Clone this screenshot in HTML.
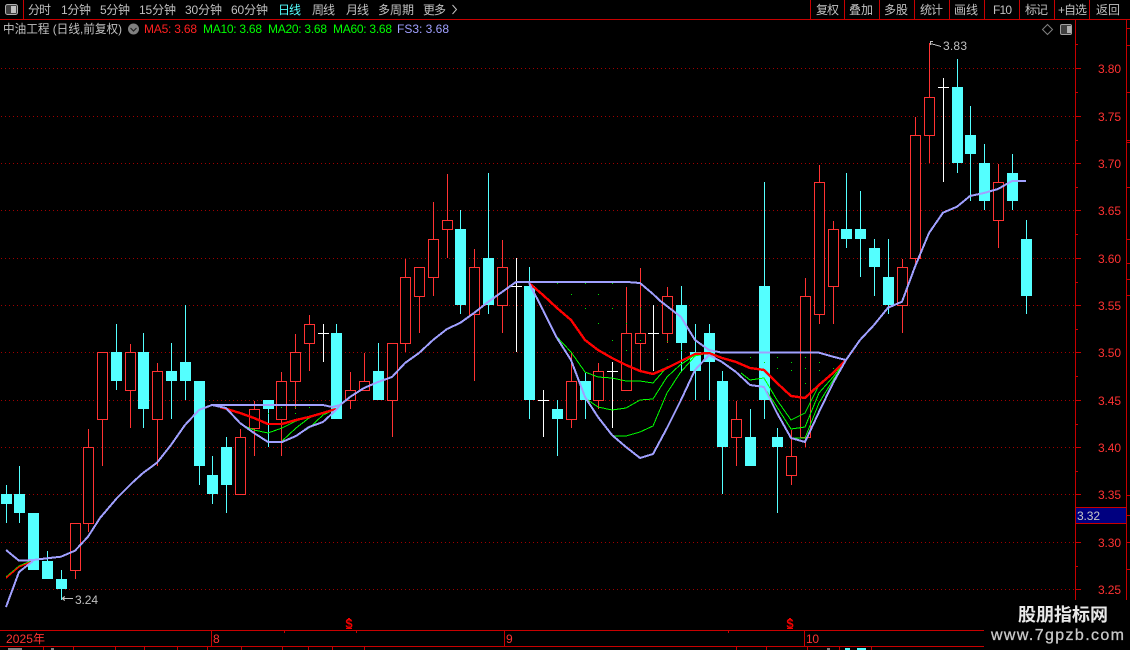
<!DOCTYPE html>
<html lang="zh"><head><meta charset="utf-8"><title>中油工程</title>
<style>
html,body{margin:0;padding:0;background:#000;width:1130px;height:650px;overflow:hidden}
svg{display:block;font-family:"Liberation Sans","Noto Sans CJK SC",sans-serif}
.c{shape-rendering:crispEdges}
.t{fill:#c0c0c0;font-size:12px}
.y{fill:#ff3232;font-size:12px}
polyline{fill:none;shape-rendering:crispEdges;stroke-linejoin:round}
.g{stroke:#00ff00;stroke-width:1}
.r{stroke:#ff0000;stroke-width:2.4}
.l{stroke:#a0a0ff;stroke-width:2}
</style></head><body>
<svg width="1130" height="650" viewBox="0 0 1130 650" xmlns="http://www.w3.org/2000/svg">
<rect width="1130" height="650" fill="#000"/>
<!-- grid -->
<g stroke="#a00000" stroke-width="1" stroke-dasharray="1 3" class="c">
<path d="M1 68.5H1075M1 116.5H1075M1 163.5H1075M1 210.5H1075M1 258.5H1075M1 305.5H1075M1 352.5H1075M1 400.5H1075M1 447.5H1075M1 494.5H1075M1 542.5H1075M1 589.5H1075"/>
</g>
<!-- chrome lines -->
<g stroke="#c80000" stroke-width="1" class="c" fill="none">
<path d="M0 19.5H1130M23.5 0V19M810.5 0V19M844.5 0V19M879.5 0V19M914.5 0V19M949.5 0V19M984.5 0V19M1019.5 0V19M1054.5 0V19M1089.5 0V19"/>
<path d="M1075.5 20V600M1126.5 20V600"/>
<path d="M1075 68.5h6M1075 116.5h6M1075 163.5h6M1075 210.5h6M1075 258.5h6M1075 305.5h6M1075 352.5h6M1075 400.5h6M1075 447.5h6M1075 494.5h6M1075 542.5h6M1075 589.5h6"/>
<path d="M1075 44.5h3M1075 92.5h3M1075 140.5h3M1075 187.5h3M1075 234.5h3M1075 282.5h3M1075 329.5h3M1075 376.5h3M1075 424.5h3M1075 471.5h3M1075 518.5h3M1075 566.5h3"/>
<path d="M1127 28.5h3M1127 45.5h3M1127 92.5h3M1127 140.5h3M1127 142.5h3M1127 187.5h3M1127 239.5h3M1127 263.5h3M1127 279.5h3M1127 295.5h3M1127 495.5h3M1127 515.5h3M1127 542.5h3M1127 569.5h3"/>
<path d="M0 630.5H984M0 646.5H984M211.5 631V646M504.5 631V646M804.5 631V646M284.5 630V633M356.5 630V633M728.5 630V633"/>
<path d="M43.5 647V650M73.5 647V650M115.5 647V650M144.5 647V650M177.5 647V650M207.5 647V650M241.5 647V650M282.5 647V650M308.5 647V650M332.5 647V650M364.5 647V650M736.5 647V650M766.5 647V650M807.5 647V650M839.5 647V650M871.5 647V650"/>
</g>
<rect x="8" y="648" width="14" height="2" fill="#808080" class="c"/>
<rect x="51" y="648" width="3" height="2" fill="#808080" class="c"/>
<rect x="827" y="648" width="3" height="2" fill="#808080" class="c"/>
<rect x="845" y="648" width="5" height="2" fill="#54ffff" class="c"/>
<rect x="857" y="648" width="9" height="2" fill="#54ffff" class="c"/>
<!-- cyan wicks -->
<path class="c" stroke="#54ffff" fill="none" d="M6.5 485V523M19.5 466V523M47.5 551V579M61.5 570V600M116.5 324V390M143.5 333V428M171.5 343V419M185.5 305V400M199.5 381V485M212.5 456V504M226.5 437V513M268.5 400V447M336.5 324V419M378.5 343V400M460.5 210V314M488.5 173V314M529.5 267V419M557.5 400V456M585.5 373V419M681.5 286V371M695.5 324V400M709.5 324V400M722.5 371V494M750.5 409V466M764.5 182V419M777.5 428V513M846.5 173V248M860.5 191V277M874.5 239V296M888.5 239V314M957.5 59V173M970.5 106V201M984.5 144V210M1012.5 154V210M1026.5 220V314"/>
<!-- red wicks -->
<path class="c" stroke="#ff3232" fill="none" d="M75.5 523V579M88.5 429V532M102.5 352V466M130.5 344V428M157.5 363V466M240.5 429V495M254.5 401V456M281.5 372V456M295.5 334V409M309.5 315V371M350.5 372V409M364.5 353V391M392.5 343V437M405.5 259V352M419.5 267V333M433.5 202V296M447.5 174V258M474.5 249V381M502.5 240V333M571.5 353V428M598.5 363V409M626.5 287V390M640.5 268V372M667.5 287V343M736.5 401V466M791.5 430V485M805.5 278V447M819.5 165V324M833.5 221V324M902.5 259V333M915.5 117V267M929.5 43V163M998.5 164V248"/>
<!-- cyan bodies -->
<path class="c" fill="#54ffff" d="M1 494h11v10h-11zM14 494h11v19h-11zM28 513h11v57h-11zM42 561h11v18h-11zM56 579h11v10h-11zM111 352h11v29h-11zM138 352h11v57h-11zM166 371h11v10h-11zM180 362h11v19h-11zM194 381h11v85h-11zM207 475h11v19h-11zM221 447h11v38h-11zM263 400h11v9h-11zM331 333h11v86h-11zM373 371h11v29h-11zM455 229h11v76h-11zM483 258h11v47h-11zM524 286h11v114h-11zM552 409h11v10h-11zM580 381h11v19h-11zM676 305h11v38h-11zM690 352h11v19h-11zM704 333h11v29h-11zM717 381h11v66h-11zM745 437h11v29h-11zM759 286h11v114h-11zM772 437h11v10h-11zM841 229h11v10h-11zM855 229h11v10h-11zM869 248h11v19h-11zM883 277h11v28h-11zM952 87h11v76h-11zM965 135h11v19h-11zM979 163h11v38h-11zM1007 173h11v28h-11zM1021 239h11v57h-11z"/>
<!-- red bodies -->
<path class="c" fill="#000" stroke="#ff3232" d="M70.5 523.5h10v47h-10zM83.5 447.5h10v76h-10zM97.5 352.5h10v67h-10zM125.5 352.5h10v38h-10zM152.5 371.5h10v48h-10zM235.5 437.5h10v57h-10zM249.5 409.5h10v19h-10zM276.5 381.5h10v38h-10zM290.5 352.5h10v29h-10zM304.5 324.5h10v19h-10zM345.5 390.5h10v10h-10zM359.5 381.5h10v9h-10zM387.5 343.5h10v57h-10zM400.5 277.5h10v66h-10zM414.5 267.5h10v29h-10zM428.5 239.5h10v38h-10zM442.5 220.5h10v9h-10zM469.5 267.5h10v47h-10zM497.5 267.5h10v38h-10zM566.5 381.5h10v38h-10zM593.5 371.5h10v29h-10zM621.5 333.5h10v57h-10zM635.5 333.5h10v10h-10zM662.5 296.5h10v37h-10zM731.5 419.5h10v18h-10zM786.5 456.5h10v19h-10zM800.5 296.5h10v141h-10zM814.5 182.5h10v132h-10zM828.5 229.5h10v57h-10zM897.5 267.5h10v38h-10zM910.5 135.5h10v123h-10zM924.5 97.5h10v38h-10zM993.5 182.5h10v38h-10z"/>
<!-- doji -->
<path class="c" stroke="#fff" fill="none" d="M323.5 324V362M318 333.5h11M516.5 258V352M511 286.5h11M543.5 390V437M538 400.5h11M612.5 362V428M607 371.5h11M653.5 305V371M648 333.5h11M943.5 78V182M938 87.5h11"/>
<!-- green dots -->
<path class="c" fill="#00e000" d="M557 283h1v1h-1zM585 283h1v1h-1zM612 283h1v1h-1zM571 294h1v1h-1zM598 294h1v1h-1zM585 308h1v1h-1zM612 308h1v1h-1zM598 323h1v1h-1zM612 340h1v1h-1zM626 323h1v1h-1zM640 308h1v1h-1zM640 340h1v1h-1zM626 350h1v1h-1zM667 341h1v1h-1zM667 359h1v1h-1zM681 350h1v1h-1zM750 357h1v1h-1zM764 362h1v1h-1zM777 357h1v1h-1zM791 362h1v1h-1zM805 357h1v1h-1zM819 362h1v1h-1zM777 368h1v1h-1zM791 370h1v1h-1zM805 368h1v1h-1zM819 370h1v1h-1zM833 368h1v1h-1zM805 383h1v1h-1zM268 413h1v1h-1zM281 407h1v1h-1zM295 407h1v1h-1zM309 407h1v1h-1zM295 413h1v1h-1z"/>
<!-- green lines -->
<g class="g">
<polyline points="6,578 19,567 33,561"/>
<polyline points="6,577 19,566 33,560"/>
<polyline points="240,424 254,430 268,433 282,428 296,421 309,417 323,413 336,409"/>
<polyline points="282,441 296,428 309,418 323,413 336,409"/>
<polyline points="282,442 296,436 309,428 323,415 336,409"/>
<polyline points="557,337 571,352 585,372 598,377 612,378 626,381 640,381 653,383 667,367 680,362 695,354 709,353"/>
<polyline points="585,398 598,407 612,410 626,408 640,400 653,399 667,377 680,365 695,355 709,353"/>
<polyline points="612,436 626,436 640,432 653,426 667,393 680,373 695,356 709,353"/>
<polyline points="741,373 750,380 764,378 777,400 791,420 805,413 819,385 833,373 846,360"/>
<polyline points="764,387 777,407 791,429 805,427 819,393 833,377 846,360"/>
<polyline points="791,438 805,438 819,403 833,380 846,360"/>
</g>
<!-- red lines -->
<g class="r">
<polyline style="stroke-width:1.4" points="6,578 19,567 33,561"/>
<polyline points="220,407 240,413 254,418 268,424 282,424 296,420 309,417 323,413 336,409"/>
<polyline points="529,283 543,295 557,308 571,320 585,340 598,350 612,358 626,365 640,371 653,374 667,368 681,361 695,354 709,353 722,358 736,362 750,368 764,370 777,383 791,396 805,398 819,385 833,373 846,360"/>
</g>
<!-- lavender lines -->
<g class="l">
<polyline points="6,550 19,560.7 33,560 47,558.3 61,556.7 75,550.7 88,536.7 100,518 117,498 132,483 143,473 157,462.7 171,445 185,425 199,410 212,405 323,405 332,407 340,405 350,397 364,388 378,382 392,377 405,363 419,353 433,340 447,329 460,323 474,313 488,302 502,292 516,282 529,282 627,282 640,283 653,294 660,300.7 681,317 695,340 709,350 722,352.7 819,352.7 833,356.7 846,360 860,340 874,325 888,307.7 902,301.7 915,266.7 929,233 943,212.7 957,206.7 970,196 984,193 998,189 1012,181 1026,181"/>
<polyline points="6,607 19,572 33,561"/>
<polyline points="212,405 226,408 240,423 254,433 268,442 282,442 296,436 309,427 323,422 336,410 340,405"/>
<polyline points="529,283 543,310 557,338 571,360 585,397 598,417 612,435 626,447 640,458 653,454 667,428 681,400 695,370 709,355 722,362 736,372 750,385 764,387 777,413 791,438 805,442 819,412 833,383 846,360"/>
</g>
<!-- annotations -->
<g fill="none" stroke="#c0c0c0" class="c">
<path d="M930 43.5l4 1 7 2M930.5 41v4M930 41.5h3"/>
<path d="M62 598.5h11M62 598.5l3-2M62 598.5l3 2"/>
</g>
<text class="t" x="943" y="50" textLength="24" lengthAdjust="spacing">3.83</text>
<text class="t" x="75" y="604" textLength="23" lengthAdjust="spacing">3.24</text>
<!-- y labels -->
<g class="y">
<text x="1098" y="73" textLength="23" lengthAdjust="spacing">3.80</text>
<text x="1098" y="121" textLength="23" lengthAdjust="spacing">3.75</text>
<text x="1098" y="168" textLength="23" lengthAdjust="spacing">3.70</text>
<text x="1098" y="215" textLength="23" lengthAdjust="spacing">3.65</text>
<text x="1098" y="263" textLength="23" lengthAdjust="spacing">3.60</text>
<text x="1098" y="310" textLength="23" lengthAdjust="spacing">3.55</text>
<text x="1098" y="357" textLength="23" lengthAdjust="spacing">3.50</text>
<text x="1098" y="405" textLength="23" lengthAdjust="spacing">3.45</text>
<text x="1098" y="452" textLength="23" lengthAdjust="spacing">3.40</text>
<text x="1098" y="499" textLength="23" lengthAdjust="spacing">3.35</text>
<text x="1098" y="547" textLength="23" lengthAdjust="spacing">3.30</text>
<text x="1098" y="594" textLength="23" lengthAdjust="spacing">3.25</text>
</g>
<!-- price box -->
<rect x="1076" y="507" width="50" height="16.5" fill="#000080" class="c"/>
<path d="M1076 507.5H1127M1076 523.5H1127" stroke="#c80000" class="c"/>
<text x="1077" y="520" fill="#c8c8c8" font-size="12" textLength="23" lengthAdjust="spacing">3.32</text>
<!-- toolbar -->
<rect x="5.5" y="4.5" width="12" height="10" rx="2" fill="#404040" stroke="#b0b0b0"/>
<rect x="11" y="6" width="5" height="7" fill="#c0c0c0"/>
<g class="t">
<text x="28" y="14" textLength="23" lengthAdjust="spacing">分时</text>
<text x="61" y="14" textLength="30" lengthAdjust="spacing">1分钟</text>
<text x="100" y="14" textLength="30" lengthAdjust="spacing">5分钟</text>
<text x="139" y="14" textLength="37" lengthAdjust="spacing">15分钟</text>
<text x="185" y="14" textLength="37" lengthAdjust="spacing">30分钟</text>
<text x="231" y="14" textLength="37" lengthAdjust="spacing">60分钟</text>
<text x="278" y="14" textLength="23" lengthAdjust="spacing" style="fill:#54ffff">日线</text>
<text x="312" y="14" textLength="23" lengthAdjust="spacing">周线</text>
<text x="346" y="14" textLength="23" lengthAdjust="spacing">月线</text>
<text x="378" y="14" textLength="36" lengthAdjust="spacing">多周期</text>
<text x="423" y="14" textLength="23" lengthAdjust="spacing">更多</text>
<text x="816" y="14" textLength="23" lengthAdjust="spacing">复权</text>
<text x="849" y="14" textLength="24" lengthAdjust="spacing">叠加</text>
<text x="884" y="14" textLength="24" lengthAdjust="spacing">多股</text>
<text x="920" y="14" textLength="23" lengthAdjust="spacing">统计</text>
<text x="954" y="14" textLength="24" lengthAdjust="spacing">画线</text>
<text x="993" y="14" textLength="19" lengthAdjust="spacing">F10</text>
<text x="1025" y="14" textLength="23" lengthAdjust="spacing">标记</text>
<text x="1058" y="14" textLength="29" lengthAdjust="spacing">+自选</text>
<text x="1096" y="14" textLength="24" lengthAdjust="spacing">返回</text>
<text x="3" y="33" textLength="119" lengthAdjust="spacingAndGlyphs">中油工程 (日线,前复权)</text>
</g>
<path d="M452.5 5l4 4.5-4 4.5" fill="none" stroke="#c0c0c0"/>
<circle cx="133.5" cy="29" r="5.5" fill="#808080"/>
<path d="M130.5 28l3 3 3-3" fill="none" stroke="#222" stroke-width="1.2"/>
<text x="144" y="33" font-size="12" fill="#ff2020" textLength="53" lengthAdjust="spacing">MA5: 3.68</text>
<text x="203" y="33" font-size="12" fill="#00ff00" textLength="59" lengthAdjust="spacing">MA10: 3.68</text>
<text x="268" y="33" font-size="12" fill="#00ff00" textLength="59" lengthAdjust="spacing">MA20: 3.68</text>
<text x="333" y="33" font-size="12" fill="#00ff00" textLength="59" lengthAdjust="spacing">MA60: 3.68</text>
<text x="397" y="33" font-size="12" fill="#a0a0ff" textLength="52" lengthAdjust="spacing">FS3: 3.68</text>
<path d="M1047.5 24.5l5 5-5 5-5-5z" fill="none" stroke="#808080"/>
<rect x="1060.5" y="24.5" width="11" height="10" rx="1.5" fill="#404040" stroke="#a0a0a0"/>
<rect x="1067" y="26" width="4" height="7" fill="#b0b0b0"/>
<!-- $ markers -->
<g fill="#f00000" font-size="13" font-weight="bold" text-anchor="middle">
<text x="349" y="628">$</text>
<text x="790" y="628">$</text>
</g>
<path class="c" d="M348 618h2v1h-2zM347 619h4v1h-4zM346 628h6v1h-6zM789 618h2v1h-2zM788 619h4v1h-4zM787 628h6v1h-6z" fill="#f00000"/>
<!-- date labels -->
<g class="y">
<text x="6" y="643" textLength="39" lengthAdjust="spacing">2025年</text>
<text x="213" y="643">8</text>
<text x="506" y="643">9</text>
<text x="806" y="643" textLength="13" lengthAdjust="spacing">10</text>
</g>
<!-- watermark -->
<rect x="984" y="600" width="146" height="50" fill="#000" class="c"/>
<text x="1018" y="621" fill="#e8e8e8" font-size="18" font-weight="bold" textLength="90" lengthAdjust="spacingAndGlyphs">股朋指标网</text>
<text x="991" y="640" fill="#c8c8c8" font-size="16" textLength="133" lengthAdjust="spacing" stroke="#c8c8c8" stroke-width=".3">www.7gpzb.com</text>
</svg>
</body></html>
